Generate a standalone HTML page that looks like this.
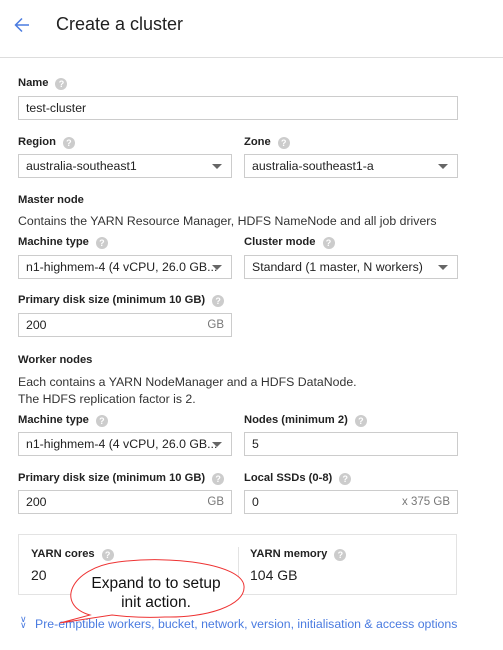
<!DOCTYPE html>
<html><head><style>
body{margin:0;width:503px;height:650px;background:#fff;font-family:"Liberation Sans",sans-serif;color:#212121;position:relative;overflow:hidden}
.a{position:absolute}
.lbl{position:absolute;font-size:11.2px;font-weight:bold;color:#222}
.q{display:inline-block;width:12px;height:12px;border-radius:50%;background:#ccc;color:#fff;font-size:9px;text-align:center;line-height:12px;font-weight:bold;margin-left:7px;vertical-align:-1px}
.in{position:absolute;border:1px solid #ccc;box-sizing:border-box;height:24px;font-size:12.3px;line-height:22px;padding-left:7px;color:#222;white-space:nowrap;overflow:hidden}
.dd{padding-right:24px}
.dd:after{content:"";position:absolute;right:9px;top:9px;border-left:5px solid transparent;border-right:5px solid transparent;border-top:5px solid #666}
.gb{position:absolute;right:7px;top:0;color:#777;font-size:11.5px}
.t{position:absolute;font-size:12.3px;color:#333}
</style></head><body>
<svg class="a" style="left:12px;top:15px" width="20" height="20" viewBox="0 0 20 20"><path d="M17 10H4M10 3.5L3.5 10 10 16.5" stroke="#4a7be0" stroke-width="1.5" fill="none"/></svg>
<div class="a" style="left:56px;top:14px;font-size:18px;color:#212121">Create a cluster</div>
<div class="a" style="left:0;top:57px;width:503px;height:1px;background:#ddd"></div>

<div class="lbl" style="left:18px;top:77px">Name<span class="q">?</span></div>
<div class="in" style="left:18px;top:96px;width:440px">test-cluster</div>

<div class="lbl" style="left:18px;top:136px">Region<span class="q">?</span></div>
<div class="in dd" style="left:18px;top:154px;width:214px">australia-southeast1</div>
<div class="lbl" style="left:244px;top:136px">Zone<span class="q">?</span></div>
<div class="in dd" style="left:244px;top:154px;width:214px">australia-southeast1-a</div>

<div class="lbl" style="left:18px;top:194px">Master node</div>
<div class="t" style="left:18px;top:214px">Contains the YARN Resource Manager, HDFS NameNode and all job drivers</div>
<div class="lbl" style="left:18px;top:236px">Machine type<span class="q">?</span></div>
<div class="in dd" style="left:18px;top:255px;width:214px">n1-highmem-4 (4 vCPU, 26.0 GB...</div>
<div class="lbl" style="left:244px;top:236px">Cluster mode<span class="q">?</span></div>
<div class="in dd" style="left:244px;top:255px;width:214px">Standard (1 master, N workers)</div>
<div class="lbl" style="left:18px;top:294px">Primary disk size (minimum 10 GB)<span class="q">?</span></div>
<div class="in" style="left:18px;top:313px;width:214px">200<span class="gb">GB</span></div>

<div class="lbl" style="left:18px;top:354px">Worker nodes</div>
<div class="t" style="left:18px;top:374px;line-height:17px">Each contains a YARN NodeManager and a HDFS DataNode.<br>The HDFS replication factor is 2.</div>
<div class="lbl" style="left:18px;top:414px">Machine type<span class="q">?</span></div>
<div class="in dd" style="left:18px;top:432px;width:214px">n1-highmem-4 (4 vCPU, 26.0 GB...</div>
<div class="lbl" style="left:244px;top:414px">Nodes (minimum 2)<span class="q">?</span></div>
<div class="in" style="left:244px;top:432px;width:214px">5</div>
<div class="lbl" style="left:18px;top:472px">Primary disk size (minimum 10 GB)<span class="q">?</span></div>
<div class="in" style="left:18px;top:490px;width:214px">200<span class="gb">GB</span></div>
<div class="lbl" style="left:244px;top:472px">Local SSDs (0-8)<span class="q">?</span></div>
<div class="in" style="left:244px;top:490px;width:214px">0<span class="gb">x 375 GB</span></div>

<div class="a" style="left:18px;top:534px;width:439px;height:61px;border:1px solid #e3e3e3;box-sizing:border-box"></div>
<div class="a" style="left:238px;top:547px;width:1px;height:35px;background:#e3e3e3"></div>
<div class="lbl" style="left:31px;top:548px">YARN cores<span class="q">?</span></div>
<div class="a" style="left:31px;top:567px;font-size:14px">20</div>
<div class="lbl" style="left:250px;top:548px">YARN memory<span class="q">?</span></div>
<div class="a" style="left:250px;top:567px;font-size:14px">104 GB</div>

<div class="a" style="left:20px;top:616px;color:#4a7be0;font-size:9px;line-height:6px">&#8744;<br>&#8744;</div>
<div class="a" style="left:35px;top:617px;font-size:12.3px;color:#4a7be0">Pre-emptible workers, bucket, network, version, initialisation &amp; access options</div>

<svg class="a" style="left:0;top:540px" width="260" height="100"><path d="M90 75 C55 65 70 28 118 22 C170 15 242 24 244 46 C246 66 205 78 165 77 C145 78 128 77 112 75 L60 83 L90 75 Z" fill="#fff" stroke="#e33" stroke-width="1"/></svg>
<div class="a" style="left:70px;top:574px;width:172px;text-align:center;font-size:15.5px;line-height:19px;color:#111">Expand to to setup<br>init action.</div>
</body></html>
